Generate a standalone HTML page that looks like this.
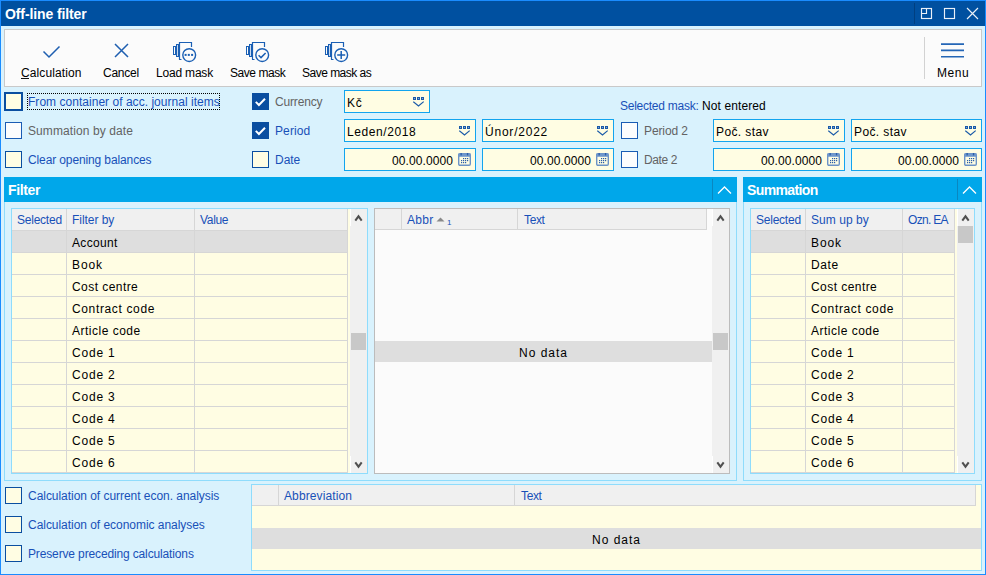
<!DOCTYPE html>
<html><head><meta charset="utf-8">
<style>
*{box-sizing:border-box}
html,body{margin:0;padding:0}
body{width:986px;height:575px;overflow:hidden;position:relative;background:#d9f2fd;font-family:"Liberation Sans",sans-serif;font-size:12px;color:#000}
.a{position:absolute}
.t{position:absolute;white-space:nowrap;line-height:14px;height:14px;font-size:12px}
.bl{color:#1850b8}
.gr{color:#636363}
.cb{position:absolute;width:17px;height:17px;border:1px solid #0a4ea0;background:#fffde3}
.cbc{background:#0a4ea0}
.inp{position:absolute;height:23px;border:1px solid #12a4ee;background:#fffde3}
.hdr{position:absolute;top:177px;height:25px;background:#00a7ea}
.grid{position:absolute}
.line{position:absolute;background:#d6d6d6}
</style></head>
<body>
<!-- window border -->
<div class="a" style="left:0;top:0;width:986px;height:575px;border:1px solid #1a8cff"></div>
<!-- title bar -->
<div class="a" style="left:1px;top:1px;width:984px;height:25px;background:#0050a0"></div>
<div class="t" style="letter-spacing:-0.107px;left:5px;top:6px;font-weight:bold;font-size:14px;line-height:16px;height:16px;color:#fff">Off-line filter</div>
<div class="a" style="left:914px;top:3px;width:1px;height:21px;background:#003f80"></div>
<svg class="a" style="left:910px;top:0" width="76" height="26" viewBox="0 0 76 26" fill="none" stroke="#eaf0f8" stroke-width="1.15">
<rect x="11.5" y="8.5" width="10" height="10"/>
<path d="M11 13.5H16.5V8"/>
<rect x="34.5" y="8.5" width="10" height="10"/>
<path d="M57 8L68 19M68 8L57 19"/>
</svg>
<!-- toolbar -->
<div class="a" style="left:4px;top:29px;width:978px;height:58px;background:#fbfbfb;border:1px solid #c9c9c9"></div>
<div class="a" style="left:924px;top:37px;width:1px;height:42px;background:#d2d2d2"></div>
<svg class="a" style="left:0;top:30px" width="986" height="40" fill="none" stroke="#1e5fb0" stroke-width="1.5">
<!-- check -->
<path d="M43.5 51.5L49 57L59.5 46.5" transform="translate(0,-30)"/>
<!-- cross -->
<path d="M115 14L128 27M128 14L115 27" />
</svg>
<svg class="a" style="left:171px;top:40px" width="28" height="24"><g fill="none" stroke="#1a5fb4" stroke-width="1">
<rect x="2.5" y="6.5" width="2" height="8"/>
<rect x="5.5" y="4.5" width="2" height="12" fill="#c9daf0"/>
<path d="M8.5 19.5V2.5H20.5V7" stroke-width="1.2"/>
<path d="M8 19.5H10.5"/>
<circle cx="18.2" cy="15.1" r="6.4" fill="#fbfbfb" stroke-width="1.4"/>
</g>
<g fill="#1a5fb4"><rect x="13.6" y="13.9" width="2" height="2"/><rect x="16.8" y="13.9" width="2" height="2"/><rect x="20.1" y="13.9" width="2" height="2"/></g></svg>
<svg class="a" style="left:244px;top:40px" width="28" height="24"><g fill="none" stroke="#1a5fb4" stroke-width="1">
<rect x="2.5" y="6.5" width="2" height="8"/>
<rect x="5.5" y="4.5" width="2" height="12" fill="#c9daf0"/>
<path d="M8.5 19.5V2.5H20.5V7" stroke-width="1.2"/>
<path d="M8 19.5H10.5"/>
<circle cx="18.2" cy="15.1" r="6.4" fill="#fbfbfb" stroke-width="1.4"/>
</g>
<path d="M14.6 15.3L17 17.6L21.6 13" fill="none" stroke="#1a5fb4" stroke-width="1.5"/></svg>
<svg class="a" style="left:323px;top:40px" width="28" height="24"><g fill="none" stroke="#1a5fb4" stroke-width="1">
<rect x="2.5" y="6.5" width="2" height="8"/>
<rect x="5.5" y="4.5" width="2" height="12" fill="#c9daf0"/>
<path d="M8.5 19.5V2.5H20.5V7" stroke-width="1.2"/>
<path d="M8 19.5H10.5"/>
<circle cx="18.2" cy="15.1" r="6.4" fill="#fbfbfb" stroke-width="1.4"/>
</g>
<path d="M14.2 15.1H22.2M18.2 11.1V19.1" fill="none" stroke="#1a5fb4" stroke-width="1.5"/></svg>
<div class="t" style="letter-spacing:0.1px;left:21px;top:66px">Calculation</div>
<div class="a" style="left:21px;top:78px;width:8px;height:1px;background:#111"></div>
<div class="t" style="letter-spacing:-0.24px;left:103px;top:66px">Cancel</div>
<div class="t" style="letter-spacing:-0.19px;left:156px;top:66px">Load mask</div>
<div class="t" style="letter-spacing:-0.46px;left:230px;top:66px">Save mask</div>
<div class="t" style="letter-spacing:-0.51px;left:302px;top:66px">Save mask as</div>
<div class="t" style="letter-spacing:0.53px;left:937px;top:66px">Menu</div>
<svg class="a" style="left:940px;top:40px" width="26" height="20" stroke="#2466b6" stroke-width="1.6"><path d="M1 4.1H24M1 10.4H24M1 16.8H24"/></svg>

<!-- form rows -->
<div class="cb" style="left:4px;top:92px;width:19px;height:19px;border-width:2px"></div>
<div class="a" style="left:27px;top:93px;width:193px;height:17px;border:1px dotted #000"></div>
<div class="t bl" style="letter-spacing:0.03px;left:28px;top:95px">From container of acc. journal items</div>
<div class="cb" style="left:5px;top:122px;background:#fcfcfd;border-color:#1a5cb4"></div>
<div class="t gr" style="letter-spacing:0.09px;left:28px;top:124px">Summation by date</div>
<div class="cb" style="left:5px;top:151px"></div>
<div class="t bl" style="letter-spacing:-0.12px;left:28px;top:153px">Clear opening balances</div>

<div class="cb cbc" style="left:252px;top:93px"></div>
<div class="t gr" style="letter-spacing:-0.16px;left:275px;top:95px">Currency</div>
<div class="cb cbc" style="left:252px;top:122px"></div>
<div class="t bl" style="letter-spacing:0.1px;left:275px;top:124px">Period</div>
<div class="cb" style="left:252px;top:151px"></div>
<div class="t bl" style="letter-spacing:-0.03px;left:275px;top:153px">Date</div>

<div class="inp" style="left:344px;top:90px;width:86px"></div>
<div class="t" style="letter-spacing:0.8px;left:347px;top:96px">Kč</div>
<div class="inp" style="left:344px;top:119px;width:132px"></div>
<div class="t" style="letter-spacing:0.59px;left:347px;top:125px">Leden/2018</div>
<div class="inp" style="left:344px;top:148px;width:132px"></div>
<div class="t" style="letter-spacing:0.09px;left:392px;top:154px">00.00.0000</div>
<div class="inp" style="left:482px;top:119px;width:132px"></div>
<div class="t" style="letter-spacing:0.78px;left:485px;top:125px">Únor/2022</div>
<div class="inp" style="left:482px;top:148px;width:132px"></div>
<div class="t" style="letter-spacing:0.09px;left:530px;top:154px">00.00.0000</div>

<div class="t bl" style="letter-spacing:-0.25px;left:620px;top:99px">Selected mask:</div>
<div class="t" style="letter-spacing:0.1px;left:702px;top:99px">Not entered</div>
<div class="cb" style="left:621px;top:122px;background:#fcfcfd;border-color:#1a5cb4"></div>
<div class="t gr" style="letter-spacing:-0.11px;left:644px;top:124px">Period 2</div>
<div class="cb" style="left:621px;top:151px;background:#fcfcfd;border-color:#1a5cb4"></div>
<div class="t gr" style="letter-spacing:-0.4px;left:644px;top:153px">Date 2</div>

<div class="inp" style="left:713px;top:119px;width:132px"></div>
<div class="t" style="letter-spacing:0.39px;left:716px;top:125px">Poč. stav</div>
<div class="inp" style="left:713px;top:148px;width:132px"></div>
<div class="t" style="letter-spacing:0.09px;left:761px;top:154px">00.00.0000</div>
<div class="inp" style="left:851px;top:119px;width:131px"></div>
<div class="t" style="letter-spacing:0.39px;left:854px;top:125px">Poč. stav</div>
<div class="inp" style="left:851px;top:148px;width:131px"></div>
<div class="t" style="letter-spacing:0.09px;left:898px;top:154px">00.00.0000</div>

<svg class="a" style="left:413px;top:97px" width="12" height="10"><g fill="#7ea3d6" stroke="#1a5aa8" stroke-width="1"><rect x="0.5" y="0.5" width="2" height="2"/><rect x="4.5" y="0.5" width="2" height="2"/><rect x="8.5" y="0.5" width="2" height="2"/></g><path d="M0.3 4.6L5.5 9L10.7 4.6" fill="none" stroke="#1a5aa8" stroke-width="1.2"/></svg>
<svg class="a" style="left:459px;top:126px" width="12" height="10"><g fill="#7ea3d6" stroke="#1a5aa8" stroke-width="1"><rect x="0.5" y="0.5" width="2" height="2"/><rect x="4.5" y="0.5" width="2" height="2"/><rect x="8.5" y="0.5" width="2" height="2"/></g><path d="M0.3 4.6L5.5 9L10.7 4.6" fill="none" stroke="#1a5aa8" stroke-width="1.2"/></svg>
<svg class="a" style="left:597px;top:126px" width="12" height="10"><g fill="#7ea3d6" stroke="#1a5aa8" stroke-width="1"><rect x="0.5" y="0.5" width="2" height="2"/><rect x="4.5" y="0.5" width="2" height="2"/><rect x="8.5" y="0.5" width="2" height="2"/></g><path d="M0.3 4.6L5.5 9L10.7 4.6" fill="none" stroke="#1a5aa8" stroke-width="1.2"/></svg>
<svg class="a" style="left:828px;top:126px" width="12" height="10"><g fill="#7ea3d6" stroke="#1a5aa8" stroke-width="1"><rect x="0.5" y="0.5" width="2" height="2"/><rect x="4.5" y="0.5" width="2" height="2"/><rect x="8.5" y="0.5" width="2" height="2"/></g><path d="M0.3 4.6L5.5 9L10.7 4.6" fill="none" stroke="#1a5aa8" stroke-width="1.2"/></svg>
<svg class="a" style="left:965px;top:126px" width="12" height="10"><g fill="#7ea3d6" stroke="#1a5aa8" stroke-width="1"><rect x="0.5" y="0.5" width="2" height="2"/><rect x="4.5" y="0.5" width="2" height="2"/><rect x="8.5" y="0.5" width="2" height="2"/></g><path d="M0.3 4.6L5.5 9L10.7 4.6" fill="none" stroke="#1a5aa8" stroke-width="1.2"/></svg>
<svg class="a" style="left:458px;top:153px" width="13" height="13"><rect x="0.7" y="0.7" width="11.6" height="11.6" rx="1.2" fill="none" stroke="#6b92c6" stroke-width="1.4"/><rect x="0.5" y="0.5" width="12" height="3.3" fill="#7098cc"/><rect x="2.5" y="0" width="1.3" height="2.4" fill="#2a5ea8"/><rect x="8.9" y="0" width="1.3" height="2.4" fill="#2a5ea8"/><g fill="#2a5ea8"><rect x="5" y="5" width="1.2" height="1.2"/><rect x="7" y="5" width="1.2" height="1.2"/><rect x="9" y="5" width="1.2" height="1.2"/><rect x="3" y="7" width="1.2" height="1.2"/><rect x="5" y="7" width="1.2" height="1.2"/><rect x="7" y="7" width="1.2" height="1.2"/><rect x="9" y="7" width="1.2" height="1.2"/><rect x="3" y="9" width="1.2" height="1.2"/><rect x="5" y="9" width="1.2" height="1.2"/><rect x="7" y="9" width="1.2" height="1.2"/></g></svg>
<svg class="a" style="left:596px;top:153px" width="13" height="13"><rect x="0.7" y="0.7" width="11.6" height="11.6" rx="1.2" fill="none" stroke="#6b92c6" stroke-width="1.4"/><rect x="0.5" y="0.5" width="12" height="3.3" fill="#7098cc"/><rect x="2.5" y="0" width="1.3" height="2.4" fill="#2a5ea8"/><rect x="8.9" y="0" width="1.3" height="2.4" fill="#2a5ea8"/><g fill="#2a5ea8"><rect x="5" y="5" width="1.2" height="1.2"/><rect x="7" y="5" width="1.2" height="1.2"/><rect x="9" y="5" width="1.2" height="1.2"/><rect x="3" y="7" width="1.2" height="1.2"/><rect x="5" y="7" width="1.2" height="1.2"/><rect x="7" y="7" width="1.2" height="1.2"/><rect x="9" y="7" width="1.2" height="1.2"/><rect x="3" y="9" width="1.2" height="1.2"/><rect x="5" y="9" width="1.2" height="1.2"/><rect x="7" y="9" width="1.2" height="1.2"/></g></svg>
<svg class="a" style="left:827px;top:153px" width="13" height="13"><rect x="0.7" y="0.7" width="11.6" height="11.6" rx="1.2" fill="none" stroke="#6b92c6" stroke-width="1.4"/><rect x="0.5" y="0.5" width="12" height="3.3" fill="#7098cc"/><rect x="2.5" y="0" width="1.3" height="2.4" fill="#2a5ea8"/><rect x="8.9" y="0" width="1.3" height="2.4" fill="#2a5ea8"/><g fill="#2a5ea8"><rect x="5" y="5" width="1.2" height="1.2"/><rect x="7" y="5" width="1.2" height="1.2"/><rect x="9" y="5" width="1.2" height="1.2"/><rect x="3" y="7" width="1.2" height="1.2"/><rect x="5" y="7" width="1.2" height="1.2"/><rect x="7" y="7" width="1.2" height="1.2"/><rect x="9" y="7" width="1.2" height="1.2"/><rect x="3" y="9" width="1.2" height="1.2"/><rect x="5" y="9" width="1.2" height="1.2"/><rect x="7" y="9" width="1.2" height="1.2"/></g></svg>
<svg class="a" style="left:964px;top:153px" width="13" height="13"><rect x="0.7" y="0.7" width="11.6" height="11.6" rx="1.2" fill="none" stroke="#6b92c6" stroke-width="1.4"/><rect x="0.5" y="0.5" width="12" height="3.3" fill="#7098cc"/><rect x="2.5" y="0" width="1.3" height="2.4" fill="#2a5ea8"/><rect x="8.9" y="0" width="1.3" height="2.4" fill="#2a5ea8"/><g fill="#2a5ea8"><rect x="5" y="5" width="1.2" height="1.2"/><rect x="7" y="5" width="1.2" height="1.2"/><rect x="9" y="5" width="1.2" height="1.2"/><rect x="3" y="7" width="1.2" height="1.2"/><rect x="5" y="7" width="1.2" height="1.2"/><rect x="7" y="7" width="1.2" height="1.2"/><rect x="9" y="7" width="1.2" height="1.2"/><rect x="3" y="9" width="1.2" height="1.2"/><rect x="5" y="9" width="1.2" height="1.2"/><rect x="7" y="9" width="1.2" height="1.2"/></g></svg>
<svg class="a" style="left:252px;top:93px" width="17" height="17"><path d="M3.8 8.9L6.9 12L13 5.8" fill="none" stroke="#fff" stroke-width="2"/></svg>
<svg class="a" style="left:252px;top:122px" width="17" height="17"><path d="M3.8 8.9L6.9 12L13 5.8" fill="none" stroke="#fff" stroke-width="2"/></svg>

<!-- Filter panel -->
<div class="hdr" style="left:4px;width:733px"></div>
<div class="t" style="letter-spacing:-0.36px;left:8px;top:182px;font-weight:bold;font-size:14px;line-height:16px;height:16px;color:#fff">Filter</div>
<div class="a" style="left:712px;top:179px;width:1px;height:21px;background:#0a87c0"></div>
<svg class="a" style="left:712px;top:177px" width="25" height="25" fill="none" stroke="#fff" stroke-width="1.3"><path d="M6 16.5L12.5 10L19 16.5"/></svg>
<div class="a" style="left:4px;top:202px;width:733px;height:279px;border:1px solid #8fdcfc;border-top:none;background:#d9f2fd"></div>

<!-- Summation panel -->
<div class="hdr" style="left:743px;width:239px"></div>
<div class="t" style="letter-spacing:-0.625px;left:747px;top:182px;font-weight:bold;font-size:14px;line-height:16px;height:16px;color:#fff">Summation</div>
<div class="a" style="left:957px;top:179px;width:1px;height:21px;background:#0a87c0"></div>
<svg class="a" style="left:957px;top:177px" width="25" height="25" fill="none" stroke="#fff" stroke-width="1.3"><path d="M6 16.5L12.5 10L19 16.5"/></svg>
<div class="a" style="left:743px;top:202px;width:239px;height:279px;border:1px solid #8fdcfc;border-top:none;background:#d9f2fd"></div>

<div class="a" style="left:11px;top:208px;width:357px;height:266px;border:1px solid #8fdcfc;background:#fffde3"></div>
<div class="a" style="left:12px;top:209px;width:336px;height:21px;background:#f0f0f0"></div>
<div class="a" style="left:12px;top:231px;width:336px;height:21px;background:#dedede"></div>
<div class="line" style="left:12px;top:230px;width:336px;height:1px"></div>
<div class="line" style="left:12px;top:252px;width:336px;height:1px"></div>
<div class="line" style="left:12px;top:274px;width:336px;height:1px"></div>
<div class="line" style="left:12px;top:296px;width:336px;height:1px"></div>
<div class="line" style="left:12px;top:318px;width:336px;height:1px"></div>
<div class="line" style="left:12px;top:340px;width:336px;height:1px"></div>
<div class="line" style="left:12px;top:362px;width:336px;height:1px"></div>
<div class="line" style="left:12px;top:384px;width:336px;height:1px"></div>
<div class="line" style="left:12px;top:406px;width:336px;height:1px"></div>
<div class="line" style="left:12px;top:428px;width:336px;height:1px"></div>
<div class="line" style="left:12px;top:450px;width:336px;height:1px"></div>
<div class="line" style="left:12px;top:472px;width:336px;height:1px"></div>
<div class="line" style="left:66px;top:209px;width:1px;height:264px"></div>
<div class="line" style="left:194px;top:209px;width:1px;height:264px"></div>
<div class="line" style="left:347px;top:209px;width:1px;height:264px"></div>
<div class="t bl" style="letter-spacing:-0.23px;left:17px;top:213px">Selected</div>
<div class="t bl" style="letter-spacing:-0.05px;left:72px;top:213px">Filter by</div>
<div class="t bl" style="letter-spacing:-0.33px;left:200px;top:213px">Value</div>
<div class="t" style="letter-spacing:0.33px;left:72px;top:236px">Account</div>
<div class="t" style="letter-spacing:0.9px;left:72px;top:258px">Book</div>
<div class="t" style="letter-spacing:0.44px;left:72px;top:280px">Cost centre</div>
<div class="t" style="letter-spacing:0.64px;left:72px;top:302px">Contract code</div>
<div class="t" style="letter-spacing:0.5px;left:72px;top:324px">Article code</div>
<div class="t" style="letter-spacing:0.82px;left:72px;top:346px">Code 1</div>
<div class="t" style="letter-spacing:0.82px;left:72px;top:368px">Code 2</div>
<div class="t" style="letter-spacing:0.82px;left:72px;top:390px">Code 3</div>
<div class="t" style="letter-spacing:0.82px;left:72px;top:412px">Code 4</div>
<div class="t" style="letter-spacing:0.82px;left:72px;top:434px">Code 5</div>
<div class="t" style="letter-spacing:0.82px;left:72px;top:456px">Code 6</div>
<div class="a" style="left:350px;top:209px;width:17px;height:264px;background:#f0f0f0"></div>
<div class="a" style="left:351px;top:333px;width:15px;height:17px;background:#c8c8c8"></div>
<div class="a" style="left:350px;top:209px;width:1px;height:17px;background:#fff"></div>
<div class="a" style="left:350px;top:456px;width:1px;height:17px;background:#fff"></div>
<svg class="a" style="left:350px;top:209px" width="17" height="264" fill="none" stroke="#505050" stroke-width="2"><path d="M5.3 11.6L8.5 7.3L11.7 11.6"/><path d="M5.3 253.4L8.5 257.7L11.7 253.4"/></svg>
<div class="a" style="left:750px;top:208px;width:225px;height:266px;border:1px solid #8fdcfc;background:#fffde3"></div>
<div class="a" style="left:751px;top:209px;width:204px;height:21px;background:#f0f0f0"></div>
<div class="a" style="left:751px;top:231px;width:204px;height:21px;background:#dedede"></div>
<div class="line" style="left:751px;top:230px;width:204px;height:1px"></div>
<div class="line" style="left:751px;top:252px;width:204px;height:1px"></div>
<div class="line" style="left:751px;top:274px;width:204px;height:1px"></div>
<div class="line" style="left:751px;top:296px;width:204px;height:1px"></div>
<div class="line" style="left:751px;top:318px;width:204px;height:1px"></div>
<div class="line" style="left:751px;top:340px;width:204px;height:1px"></div>
<div class="line" style="left:751px;top:362px;width:204px;height:1px"></div>
<div class="line" style="left:751px;top:384px;width:204px;height:1px"></div>
<div class="line" style="left:751px;top:406px;width:204px;height:1px"></div>
<div class="line" style="left:751px;top:428px;width:204px;height:1px"></div>
<div class="line" style="left:751px;top:450px;width:204px;height:1px"></div>
<div class="line" style="left:751px;top:472px;width:204px;height:1px"></div>
<div class="line" style="left:805px;top:209px;width:1px;height:264px"></div>
<div class="line" style="left:902px;top:209px;width:1px;height:264px"></div>
<div class="line" style="left:954px;top:209px;width:1px;height:264px"></div>
<div class="t bl" style="letter-spacing:-0.23px;left:756px;top:213px">Selected</div>
<div class="t bl" style="letter-spacing:0.05px;left:811px;top:213px">Sum up by</div>
<div class="t bl" style="letter-spacing:-0.7px;left:908px;top:213px">Ozn. EA</div>
<div class="t" style="letter-spacing:0.9px;left:811px;top:236px">Book</div>
<div class="t" style="letter-spacing:0.6px;left:811px;top:258px">Date</div>
<div class="t" style="letter-spacing:0.44px;left:811px;top:280px">Cost centre</div>
<div class="t" style="letter-spacing:0.64px;left:811px;top:302px">Contract code</div>
<div class="t" style="letter-spacing:0.5px;left:811px;top:324px">Article code</div>
<div class="t" style="letter-spacing:0.82px;left:811px;top:346px">Code 1</div>
<div class="t" style="letter-spacing:0.82px;left:811px;top:368px">Code 2</div>
<div class="t" style="letter-spacing:0.82px;left:811px;top:390px">Code 3</div>
<div class="t" style="letter-spacing:0.82px;left:811px;top:412px">Code 4</div>
<div class="t" style="letter-spacing:0.82px;left:811px;top:434px">Code 5</div>
<div class="t" style="letter-spacing:0.82px;left:811px;top:456px">Code 6</div>
<div class="a" style="left:957px;top:209px;width:17px;height:264px;background:#f0f0f0"></div>
<div class="a" style="left:958px;top:226px;width:15px;height:17px;background:#c8c8c8"></div>
<div class="a" style="left:957px;top:209px;width:1px;height:17px;background:#fff"></div>
<div class="a" style="left:957px;top:456px;width:1px;height:17px;background:#fff"></div>
<svg class="a" style="left:957px;top:209px" width="17" height="264" fill="none" stroke="#505050" stroke-width="2"><path d="M5.3 11.6L8.5 7.3L11.7 11.6"/><path d="M5.3 253.4L8.5 257.7L11.7 253.4"/></svg>
<div class="a" style="left:374px;top:208px;width:356px;height:266px;border:1px solid #bcbcbc;background:#fbfbfb"></div>
<div class="a" style="left:375px;top:209px;width:332px;height:21px;background:#f0f0f0"></div>
<div class="line" style="left:375px;top:229px;width:332px;height:1px"></div>
<div class="line" style="left:401px;top:209px;width:1px;height:21px"></div>
<div class="line" style="left:517px;top:209px;width:1px;height:21px"></div>
<div class="line" style="left:706px;top:209px;width:1px;height:21px"></div>
<div class="t bl" style="letter-spacing:0.33px;left:407px;top:213px">Abbr</div>
<svg class="a" style="left:436px;top:216px" width="10" height="6"><path d="M0.5 5.5L4.5 1.5L8.5 5.5Z" fill="#8a8a8a"/></svg>
<div class="t bl" style="left:447px;top:216px;font-size:8px">1</div>
<div class="t bl" style="letter-spacing:-0.37px;left:524px;top:213px">Text</div>
<div class="a" style="left:375px;top:341px;width:337px;height:21px;background:#dedede"></div>
<div class="t" style="letter-spacing:1.0px;left:519px;top:346px">No data</div>
<div class="a" style="left:712px;top:209px;width:17px;height:264px;background:#f0f0f0"></div>
<div class="a" style="left:713px;top:333px;width:15px;height:17px;background:#c8c8c8"></div>
<div class="a" style="left:712px;top:209px;width:1px;height:17px;background:#fff"></div>
<div class="a" style="left:712px;top:456px;width:1px;height:17px;background:#fff"></div>
<svg class="a" style="left:712px;top:209px" width="17" height="264" fill="none" stroke="#505050" stroke-width="2"><path d="M5.3 11.6L8.5 7.3L11.7 11.6"/><path d="M5.3 253.4L8.5 257.7L11.7 253.4"/></svg>
<div class="a" style="left:251px;top:484px;width:731px;height:87px;border:1px solid #8fdcfc;background:#fffde3"></div>
<div class="a" style="left:252px;top:485px;width:724px;height:20px;background:#f0f0f0"></div>
<div class="line" style="left:252px;top:505px;width:724px;height:1px"></div>
<div class="line" style="left:278px;top:485px;width:1px;height:20px"></div>
<div class="line" style="left:514px;top:485px;width:1px;height:20px"></div>
<div class="line" style="left:975px;top:485px;width:1px;height:20px"></div>
<div class="t bl" style="letter-spacing:0.12px;left:284px;top:489px">Abbreviation</div>
<div class="t bl" style="letter-spacing:-0.37px;left:521px;top:489px">Text</div>
<div class="a" style="left:252px;top:528px;width:729px;height:21px;background:#dedede"></div>
<div class="t" style="letter-spacing:1.0px;left:592px;top:533px">No data</div>

<!-- bottom -->
<div class="cb" style="left:5px;top:487px"></div>
<div class="t bl" style="letter-spacing:-0.04px;left:28px;top:489px">Calculation of current econ. analysis</div>
<div class="cb" style="left:5px;top:516px"></div>
<div class="t bl" style="letter-spacing:-0.04px;left:28px;top:518px">Calculation of economic analyses</div>
<div class="cb" style="left:5px;top:545px"></div>
<div class="t bl" style="letter-spacing:-0.14px;left:28px;top:547px">Preserve preceding calculations</div>

</body></html>
